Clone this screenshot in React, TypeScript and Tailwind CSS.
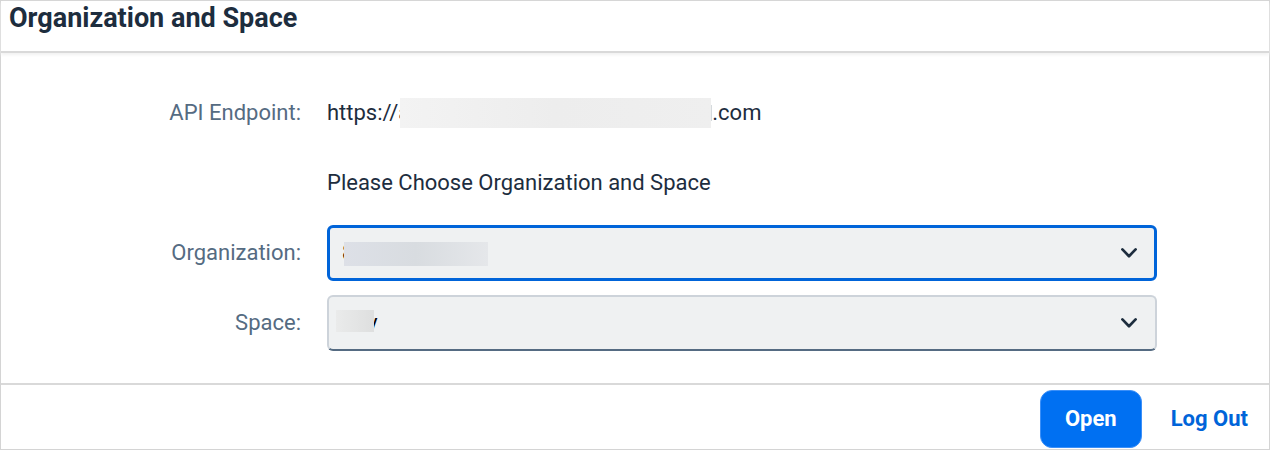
import { ReactNode } from "react";

function Chevron() {
  return (
    <svg
      className="pointer-events-none absolute top-1/2 right-5 h-3 w-4 -translate-y-1/2"
      viewBox="0 0 16 12"
      fill="none"
      stroke="#1d2d3e"
      strokeWidth="2.7"
      strokeLinecap="round"
      strokeLinejoin="round"
      aria-hidden="true"
    >
      <path d="M1.4 2.4 8 9.2l6.6-6.8" />
    </svg>
  );
}

type FieldProps = {
  id: string;
  label: string;
  value: string;
  className: string;
  children: ReactNode;
};

function SelectField({ id, label, value, className, children }: FieldProps) {
  return (
    <>
      <label htmlFor={id} className="text-right text-[#556b82]">
        {label}
      </label>
      <div className="relative">
        <select
          id={id}
          defaultValue={value}
          className={
            "block h-14 w-full appearance-none rounded-md bg-[#eff1f2] pr-12 text-black outline-none " +
            className
          }
        >
          <option value={value}>{value}</option>
        </select>
        {children}
        <Chevron />
      </div>
      <span />
    </>
  );
}

export default function App() {
  return (
    <main className="flex min-h-screen flex-col border border-[#d4d4d4] bg-white font-['Roboto',sans-serif] text-[22px] leading-8 text-[#1d2d3e]">
      <header className="border-b-2 border-[#d9d9d9] px-2 pb-4 shadow-[0_2px_3px_#f1f1f1]">
        <h1 className="text-[27px] leading-[34px] font-bold">Organization and Space</h1>
      </header>

      <form
        id="target"
        className="grid grow grid-cols-[300fr_830fr_86fr] content-start items-center gap-x-[26px] gap-y-[14px] pt-8 pb-8"
      >
        <span className="text-right text-[#556b82]">API Endpoint:</span>
        <p className="flex h-14 items-center">
          <span>https://a</span>
          <span className="relative -ml-[10px] h-[30px] w-[311px] bg-linear-to-r from-[#f3f3f3] via-[#ededed] to-[#efefef]" />
          <span className="h-4 w-px bg-[#d5dadd]" />
          <span>.com</span>
        </p>
        <span />

        <p className="col-start-2 flex h-14 items-center">
          Please Choose Organization and Space
        </p>
        <span />

        <SelectField
          id="organization"
          label="Organization:"
          value="8"
          className="border-3 border-[#0064d9] pl-3"
        >
          <span className="absolute top-[17px] left-[17px] h-6 w-36 bg-linear-to-r from-[#dde0e7] via-[#d8dce0] to-[#e5e7ea]" />
        </SelectField>

        <SelectField
          id="space"
          label="Space:"
          value="dev"
          className="border-2 border-[#cdd3da] border-b-[#556b82] pl-[14px]"
        >
          <span className="absolute top-[15px] left-[9px] h-[22px] w-[38px] bg-linear-to-r from-[#eaebeb] to-[#dedfdf]" />
        </SelectField>
      </form>

      <footer className="flex items-center justify-end gap-[14px] border-t-2 border-[#d9d9d9] px-[6px] pt-[5px] pb-px">
        <button
          type="submit"
          form="target"
          className="h-[58px] rounded-xl border border-[#3b8ff8] bg-[#0070f2] px-6 font-bold text-white"
        >
          Open
        </button>
        <button type="button" className="h-[58px] px-[15px] font-bold text-[#0064d9]">
          Log Out
        </button>
      </footer>
    </main>
  );
}
